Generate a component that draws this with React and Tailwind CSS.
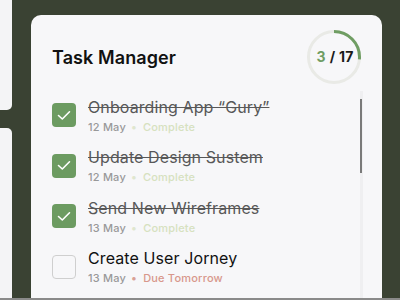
import React from "react";

const tasks = [
  { title: "Onboarding App “Gury”", date: "12 May", status: "Complete", done: true },
  { title: "Update Design Sustem", date: "12 May", status: "Complete", done: true },
  { title: "Send New Wireframes", date: "13 May", status: "Complete", done: true },
  { title: "Create User Jorney", date: "13 May", status: "Due Tomorrow", done: false },
];

function Progress() {
  const r = 25.5;
  const c = 2 * Math.PI * r;
  const len = (95 / 360) * c;
  return (
    <div className="relative w-[54px] h-[54px] shrink-0">
      <svg width="54" height="54" viewBox="0 0 54 54" className="absolute inset-0">
        <circle cx="27" cy="27" r={r} fill="none" stroke="#e9eae6" strokeWidth="3" />
        <circle
          cx="27"
          cy="27"
          r={r}
          fill="none"
          stroke="#6f9d63"
          strokeWidth="3"
          strokeDasharray={`${len} ${c}`}
          transform="rotate(-90 27 27)"
        />
      </svg>
      <div className="absolute inset-0 flex items-center justify-center text-[14px] font-bold leading-none tracking-[0.2px] pl-[2px]">
        <span className="text-[#6f9d63]">3</span>
        <span className="text-[#1a1a1a] ml-[4px]">/ 17</span>
      </div>
    </div>
  );
}

function Check({ done }) {
  if (done) {
    return (
      <div className="w-[24px] h-[24px] rounded-[4px] bg-[#6c9b61] flex items-center justify-center shrink-0">
        <svg width="14" height="11" viewBox="0 0 14 11">
          <path d="M1.5 5.5 L5.3 9 L12.5 1.8" fill="none" stroke="#ffffff" strokeWidth="1.6" strokeLinecap="round" strokeLinejoin="round" />
        </svg>
      </div>
    );
  }
  return <div className="w-[24px] h-[24px] rounded-[4px] border-[1.5px] border-[#cfcfcf] bg-[#f7f7f9] shrink-0" />;
}

export default function App() {
  return (
    <div
      className="w-[400px] h-[300px] bg-[#3a4233] flex overflow-hidden border-b-[2px] border-[#8a8a8a]"
      style={{ fontFamily: "Inter, 'Noto Sans', sans-serif" }}
    >
      <div className="w-[12px] flex flex-col gap-[18px] shrink-0">
        <div className="h-[110px] bg-[#f4f4f6] rounded-br-[5px]" />
        <div className="flex-1 bg-[#f4f4f6] rounded-tr-[5px]" />
      </div>
      <div className="w-[19px] shrink-0" />
      <div className="w-[351px] mt-[15px] bg-[#f7f7f9] rounded-t-[10px] flex flex-col shrink-0">
        <div className="flex items-center justify-between pl-[21px] pr-[21px] pt-[15px]">
          <div className="text-[18px] font-semibold text-[#111111] tracking-[0.1px]">Task Manager</div>
          <Progress />
        </div>
        <div className="flex flex-1 pt-[6px]">
          <div className="flex-1 flex flex-col pl-[21px]">
            {tasks.map((t) => (
              <div key={t.title} className="h-[50.5px] flex items-center gap-[12px] shrink-0">
                <Check done={t.done} />
                <div className="flex flex-col gap-[3px]">
                  <div
                    className={
                      "text-[16px] leading-[20px] whitespace-nowrap tracking-[0.1px] " +
                      (t.done ? "text-[#585858] line-through decoration-[#585858]" : "text-[#111111]")
                    }
                  >
                    {t.title}
                  </div>
                  <div className="text-[11px] leading-[14px] flex items-center whitespace-nowrap tracking-[0.2px] font-medium">
                    <span className="text-[#999999]">{t.date}</span>
                    <span className={"ml-[5px] mr-[6px] " + (t.done ? "text-[#dfe6cf]" : "text-[#d9a196]")}>•</span>
                    <span className={t.done ? "text-[#d6e1bf]" : "text-[#d8978c]"}>{t.status}</span>
                  </div>
                </div>
              </div>
            ))}
          </div>
          <div className="w-[3px] mr-[19px] mt-[1px] bg-[#efeff1] flex flex-col">
            <div className="h-[74px] mt-[8px] w-[2px] bg-[#7a7a7a]" />
          </div>
        </div>
      </div>
    </div>
  );
}
